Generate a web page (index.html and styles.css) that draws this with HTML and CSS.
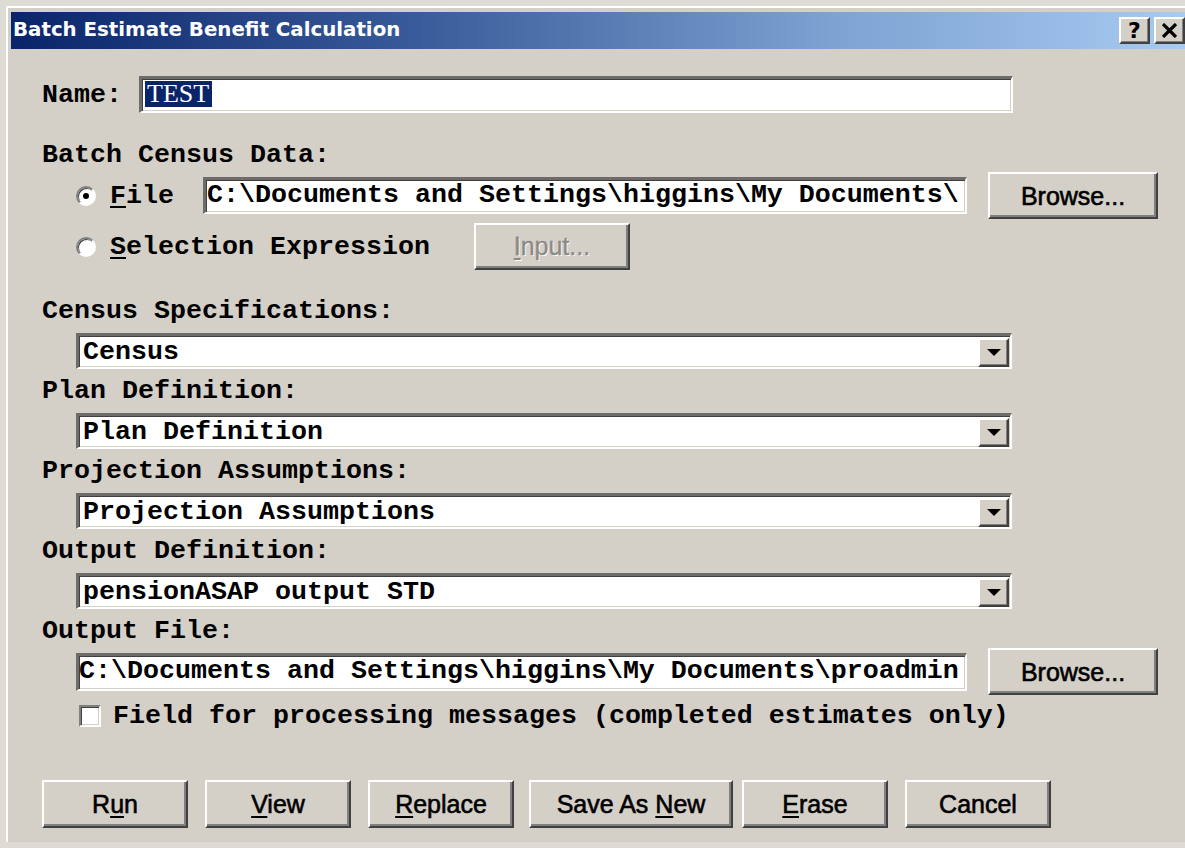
FILE: index.html
```html
<!DOCTYPE html>
<html>
<head>
<meta charset="utf-8">
<title>Batch Estimate Benefit Calculation</title>
<link rel="stylesheet" href="styles.css">
</head>
<body>
<div class="window">
  <div class="titlebar">
    <span class="title">Batch Estimate Benefit Calculation</span>
    <div class="cap-btns">
      <span class="cap-btn help">?</span>
      <span class="cap-btn close">
        <svg width="17" height="15" viewBox="0 0 17 15"><path d="M2 1 L15 14 M15 1 L2 14" stroke="#000" stroke-width="3.2" fill="none"/></svg>
      </span>
    </div>
  </div>

  <div class="dialog">
    <div class="row name-row">
      <span class="lbl name-lbl">Name:</span>
      <div class="field name-field"><span class="sel">TEST</span></div>
    </div>

    <div class="lbl heading">Batch Census Data:</div>
    <div class="row opt-row">
      <span class="radio checked"></span>
      <span class="lbl opt-lbl"><u>F</u>ile</span>
      <div class="field text file-field">C:\Documents and Settings\higgins\My Documents\</div>
      <button class="btn browse">Browse...</button>
    </div>
    <div class="row opt-row sel-row">
      <span class="radio"></span>
      <span class="lbl opt-lbl"><u>S</u>election Expression</span>
      <button class="btn input-btn" disabled><u>I</u>nput...</button>
    </div>

    <div class="lbl heading gap-l">Census Specifications:</div>
    <div class="combo"><span class="combo-text">Census</span><span class="drop"><i class="tri"></i></span></div>

    <div class="lbl heading">Plan Definition:</div>
    <div class="combo"><span class="combo-text">Plan Definition</span><span class="drop"><i class="tri"></i></span></div>

    <div class="lbl heading">Projection Assumptions:</div>
    <div class="combo"><span class="combo-text">Projection Assumptions</span><span class="drop"><i class="tri"></i></span></div>

    <div class="lbl heading">Output Definition:</div>
    <div class="combo"><span class="combo-text">pensionASAP output STD</span><span class="drop"><i class="tri"></i></span></div>

    <div class="lbl heading">Output File:</div>
    <div class="row out-row">
      <div class="field text out-field">C:\Documents and Settings\higgins\My Documents\proadmin</div>
      <button class="btn browse">Browse...</button>
    </div>
    <div class="row check-row">
      <span class="checkbox"></span>
      <span class="lbl">Field for processing messages (completed estimates only)</span>
    </div>

    <div class="row actions">
      <button class="btn act">R<u>u</u>n</button>
      <button class="btn act"><u>V</u>iew</button>
      <button class="btn act"><u>R</u>eplace</button>
      <button class="btn act wide">Save As <u>N</u>ew</button>
      <button class="btn act tight"><u>E</u>rase</button>
      <button class="btn act">Cancel</button>
    </div>
  </div>
</div>
</body>
</html>
```

FILE: styles.css
```css
html, body {
  margin: 0;
  padding: 0;
}

body {
  width: 1185px;
  height: 848px;
  overflow: hidden;
  background: #dedbd5;
}

/* window frame */
.window {
  margin: 6px 0 0 6px;
  border-top: 2px solid #ffffff;
  border-left: 2px solid #ffffff;
  padding: 4px 0 0 3px;
  height: 836px;
  background: #d4d0c8;
  box-sizing: border-box;
  overflow: hidden;
}

.titlebar {
  display: flex;
  justify-content: space-between;
  align-items: flex-start;
  height: 37px;
  background: linear-gradient(90deg, #0a246a 0%, #3a5c9a 35%, #7ea2d2 70%, #a6caf0 100%);
}

.title {
  padding-left: 2px;
  color: #ffffff;
  font-family: "DejaVu Sans", sans-serif;
  font-weight: bold;
  font-size: 19.8px;
  line-height: 36px;
  white-space: nowrap;
}

.cap-btns {
  display: flex;
  gap: 4px;
  padding-top: 5px;
}

.cap-btn {
  display: flex;
  align-items: center;
  justify-content: center;
  width: 31px;
  height: 27px;
  box-sizing: border-box;
  background: #d4d0c8;
  border: 2px solid;
  border-color: #ffffff #404040 #404040 #ffffff;
  box-shadow: inset -1px -1px #808080;
  font-family: "DejaVu Sans", sans-serif;
  font-weight: bold;
  font-size: 22px;
  line-height: 1;
  color: #000;
}

/* dialog content */
.dialog {
  padding: 27px 0 0 31px;
}

.lbl {
  font-family: "Liberation Mono", "Courier New", monospace;
  font-weight: bold;
  font-size: 26.67px;
  line-height: 30px;
  color: #000;
  white-space: nowrap;
}

.lbl u {
  text-decoration-thickness: 2px;
  text-underline-offset: 3px;
}

.row {
  display: flex;
  align-items: center;
}

.name-row {
  height: 37px;
}

.name-lbl {
  width: 97px;
}

/* sunken edit box */
.field {
  box-sizing: border-box;
  background: #ffffff;
  border-style: solid;
  border-width: 3px 2px 2px 3px;
  border-color: #6e6c68 #ffffff #ffffff #6e6c68;
  box-shadow: inset 1px 1px #404040, inset -1px -1px #d4d0c8;
  overflow: hidden;
  white-space: nowrap;
}

.name-field {
  width: 874px;
  height: 37px;
  padding: 2px 0 0 3px;
}

.sel {
  display: inline-block;
  padding: 0 3px 0 2px;
  background: #0a246a;
  color: #ffffff;
  font-family: "Liberation Serif", "Times New Roman", serif;
  font-size: 26px;
  line-height: 26px;
}

.field.text {
  font-family: "Liberation Mono", "Courier New", monospace;
  font-weight: bold;
  font-size: 26.67px;
  line-height: 31px;
  color: #000;
}

.heading {
  margin-top: 7px;
}

.name-row + .heading {
  margin-top: 27px;
}

.heading.gap-l {
  margin-top: 26px;
}

.opt-row {
  height: 47px;
  margin-top: 2px;
}

.sel-row {
  margin-top: 4px;
}

.radio {
  position: relative;
  width: 20px;
  height: 20px;
  margin-left: 34px;
  box-sizing: border-box;
  border-radius: 50%;
  border: 2px solid;
  border-color: #808080 #ffffff #ffffff #808080;
  background: #ffffff;
  box-shadow: inset 1px 1px #404040;
  flex: none;
}

.radio.checked::after {
  content: "";
  position: absolute;
  left: 5px;
  top: 5px;
  width: 6px;
  height: 6px;
  border-radius: 50%;
  background: #000;
}

.opt-lbl {
  margin-left: 14px;
}

.file-field {
  width: 764px;
  height: 37px;
  margin-left: 29px;
  padding-left: 1px;
}

/* raised push button */
.btn {
  box-sizing: border-box;
  padding: 0;
  background: #d4d0c8;
  border: 2px solid;
  border-color: #ffffff #404040 #404040 #ffffff;
  box-shadow: inset -2px -2px #808080;
  font-family: "Liberation Sans", Arial, sans-serif;
  font-size: 25px;
  color: #000;
  -webkit-text-stroke: 0.6px #000;
  cursor: default;
}

.btn u {
  text-decoration-thickness: 2px;
  text-underline-offset: 3px;
}

.browse {
  width: 170px;
  height: 47px;
  margin-left: 21px;
  padding-top: 1px;
}

.input-btn {
  width: 156px;
  height: 47px;
  margin-left: 44px;
  color: #8c8a86;
  -webkit-text-stroke: 0.3px #8c8a86;
  text-shadow: 1px 1px #ffffff;
}

/* drop-down list */
.combo {
  display: flex;
  align-items: center;
  justify-content: space-between;
  width: 936px;
  height: 36px;
  margin: 7px 0 0 34px;
  box-sizing: border-box;
  background: #ffffff;
  border-style: solid;
  border-width: 3px 2px 2px 3px;
  border-color: #6e6c68 #ffffff #ffffff #6e6c68;
  box-shadow: inset 1px 1px #404040, inset -1px -1px #d4d0c8;
}

.combo-text {
  padding-left: 4px;
  font-family: "Liberation Mono", "Courier New", monospace;
  font-weight: bold;
  font-size: 26.67px;
  line-height: 30px;
  white-space: nowrap;
}

.drop {
  display: flex;
  align-items: center;
  justify-content: center;
  width: 31px;
  height: 29px;
  margin: 1px 1px 0 0;
  box-sizing: border-box;
  background: #d4d0c8;
  border: 2px solid;
  border-color: #ffffff #404040 #404040 #ffffff;
  box-shadow: inset -1px -1px #808080;
}

.tri {
  width: 0;
  height: 0;
  border-left: 7px solid transparent;
  border-right: 7px solid transparent;
  border-top: 7px solid #000;
  margin-top: 1px;
}

.out-row {
  height: 47px;
  margin-top: 2px;
  padding-left: 34px;
}

.out-field {
  width: 891px;
  height: 38px;
  padding-left: 0;
}

.check-row {
  height: 30px;
  margin-top: 6px;
}

.checkbox {
  width: 22px;
  height: 22px;
  margin: 0 12px 0 37px;
  box-sizing: border-box;
  background: #ffffff;
  border: 2px solid;
  border-color: #808080 #ffffff #ffffff #808080;
  box-shadow: inset 1px 1px #404040, inset -1px -1px #d4d0c8;
  flex: none;
}

.actions {
  height: 48px;
  margin-top: 49px;
}

.act {
  width: 146px;
  height: 48px;
  padding-top: 1px;
}

.act + .act {
  margin-left: 17px;
}

.act.wide {
  width: 204px;
  margin-left: 15px;
}

.act.tight {
  margin-left: 9px;
}
```
